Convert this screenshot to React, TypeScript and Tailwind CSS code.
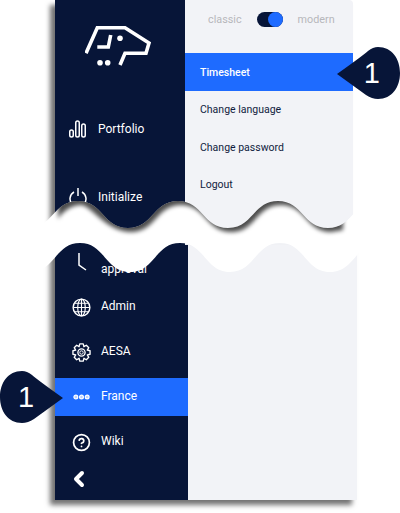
import React from 'react';
import { CircleHelp, ChevronLeft } from 'lucide-react';

const topEdge =
  'C53 228 53 201 78 201 S103 228 128 228 S153 201 178 201 S203 228 228 228 S253 201 278 201 S303 228 328 228 S353 201 378 201';
const bottomEdge =
  'L380 243 C355 243 355 272 330 272 S305 243 280 243 S255 272 230 272 S205 243 180 243 S155 272 130 272 S105 243 80 243 S55 272 30 272';
const bandPath = `M0 228 L28 228 ${topEdge} L400 201 L400 243 ${bottomEdge} L0 272 Z`;

// eight teeth, drawn as one outline
const gearPoints = Array.from({ length: 8 }, (_, i) => {
  const a = (i * Math.PI) / 4;
  const at = (r: number, off: number) =>
    `${(10 + r * Math.cos(a + off)).toFixed(2)},${(10 + r * Math.sin(a + off)).toFixed(2)}`;
  return [at(6.6, -0.4), at(9.2, -0.2), at(9.2, 0.2), at(6.6, 0.4)].join(' ');
}).join(' ');

const Logo: React.FC = () => (
  <svg viewBox="0 0 70 42" className="w-[70px] h-[42px]" fill="none" stroke="white" strokeWidth="3.600">
    <path d="M1 27.300 L12.300 1.800 H40 L64 17 L61 27.300 H40 L35 39" />
    <path d="M25.700 9 L23.300 21 H12.300" />
    <circle cx="15" cy="36.700" r="2.800" fill="white" stroke="none" />
    <circle cx="22.700" cy="36.700" r="2.800" fill="white" stroke="none" />
    <circle cx="35" cy="12.300" r="2.800" fill="white" stroke="none" />
  </svg>
);

const Bars: React.FC = () => (
  <svg viewBox="0 0 18 18" className="w-[18px] h-[18px]" fill="none" stroke="white" strokeWidth="1.500">
    <rect x="0.750" y="10" width="3.500" height="7" rx="1.750" />
    <rect x="6.750" y="1" width="3.500" height="16" rx="1.750" />
    <rect x="12.750" y="4" width="3.500" height="13" rx="1.750" />
  </svg>
);

const Power: React.FC = () => (
  <svg viewBox="0 0 18 18" className="w-[18px] h-[18px]" fill="none" stroke="white" strokeWidth="1.500">
    <path d="M5 4 A8 8 0 1 0 13 4" />
    <path d="M9 0 V8" />
  </svg>
);

const Globe: React.FC = () => (
  <svg viewBox="0 0 20 20" className="w-[19px] h-[19px]" fill="none" stroke="white" strokeWidth="1.200">
    <circle cx="10" cy="10" r="8.800" strokeWidth="1.500" />
    <ellipse cx="10" cy="10" rx="4" ry="8.800" />
    <path d="M10 1 V19 M1.500 10 H18.500 M3 5.500 H17 M3 14.500 H17" />
  </svg>
);

const Gear: React.FC = () => (
  <svg viewBox="0 0 20 20" className="w-[19px] h-[19px]" fill="none" stroke="white" strokeWidth="1.400" strokeLinejoin="round">
    <polygon points={gearPoints} />
    <circle cx="10" cy="10" r="3.800" />
    <circle cx="10" cy="10" r="1.800" strokeWidth="1" />
  </svg>
);

const Dots: React.FC = () => (
  <svg viewBox="0 0 18 6" className="w-[17px] h-[6px]" fill="#b9cfff" stroke="#ffffff" strokeWidth="1.300">
    <circle cx="3" cy="3" r="2" />
    <circle cx="9" cy="3" r="2" />
    <circle cx="15" cy="3" r="2" />
  </svg>
);

const NavItem: React.FC<{ icon: React.ReactNode; label: string; active?: boolean; top?: boolean }> = ({ icon, label, active, top }) => (
  <div className={`flex items-center h-[38px] shrink-0 text-white ${top ? 'pl-[13px]' : 'pl-[16px]'} ${active ? 'bg-[#1e6bff]' : ''}`}>
    <div className="w-[20px] flex justify-center">{icon}</div>
    <span className={`ml-[10px] text-[12px] ${top ? '' : 'pb-[2px]'}`}>{label}</span>
  </div>
);

const Callout: React.FC<{ side: 'left' | 'right' }> = ({ side }) => (
  <div
    className={`absolute w-[64px] h-[54px] flex items-center ${
      side === 'right' ? 'left-[336px] top-[46px] justify-end pr-[20px]' : 'left-0 top-[370px] justify-start pl-[18px]'
    }`}
  >
    <svg viewBox="0 0 64 54" className={`absolute inset-0 w-[64px] h-[54px] ${side === 'left' ? '-scale-x-100' : ''}`}>
      <path d="M1 28 Q25 11 32 5 Q37 1 42 1 C56 1 64 13 64 27 C64 41 56 53 42 53 Q36 53 30 49 Z" fill="#071538" />
    </svg>
    <span className="relative text-white text-[29px] leading-none font-['Liberation_Sans',sans-serif]">1</span>
  </div>
);

const MenuLink: React.FC<{ label: string; active?: boolean; short?: boolean }> = ({ label, active, short }) => (
  <div
    className={`flex items-center pl-[15px] text-[10.500px] ${short ? 'h-[36px]' : 'h-[38px]'} ${
      active ? 'pt-[1px] bg-[#1e6bff] text-white font-medium' : 'text-[#101c3e]'
    }`}
  >
    {label}
  </div>
);

const App: React.FC = () => {
  return (
    <div className="relative w-[400px] h-[513px] overflow-hidden bg-white font-['Roboto',sans-serif]">
      {/* top half */}
      <div className="ml-[55px] w-[298px] h-[245px] flex bg-[#f2f3f7] rounded-tr-[4px] shadow-[-5px_5px_5px_rgba(0,0,0,0.55)]">
        <div className="w-[130px] bg-[#071538] flex flex-col pt-[26px]">
          <div className="pl-[30px] mb-[42px]">
            <Logo />
          </div>
          <div className="flex flex-col gap-[30px]">
            <NavItem top icon={<Bars />} label="Portfolio" />
            <NavItem top icon={<Power />} label="Initialize" />
          </div>
        </div>
        <div className="flex-1">
          <div className="h-[53px] flex items-start pt-[12px] pl-[23px] text-[10.800px] text-[#b7b7bb]">
            <span className="leading-[15px]">classic</span>
            <div className="mx-[15px] w-[26px] h-[15px] rounded-full bg-[#071538] flex justify-end">
              <div className="w-[15px] h-[15px] rounded-full bg-[#1e6bff]" />
            </div>
            <span className="leading-[15px]">modern</span>
          </div>
          <MenuLink label="Timesheet" active />
          <MenuLink label="Change language" />
          <MenuLink label="Change password" />
          <MenuLink label="Logout" short />
        </div>
      </div>

      {/* bottom half */}
      <div className="ml-[55px] w-[302px] h-[255px] flex bg-[#f2f3f7] shadow-[-5px_5px_5px_rgba(0,0,0,0.55)]">
        <div className="w-[133px] bg-[#071538] flex flex-col">
          <div className="h-[43px] shrink-0 relative text-white">
            <svg viewBox="0 0 12 22" className="absolute left-[21px] top-[6px] w-[12px] h-[22px]" fill="none" stroke="white" strokeWidth="1.500">
              <path d="M3 2 V14 L10 19" />
            </svg>
            <span className="absolute left-[46px] top-[15px] text-[12px]">approval</span>
          </div>
          <div className="flex flex-col gap-[7px]">
            <NavItem icon={<Globe />} label="Admin" />
            <NavItem icon={<Gear />} label="AESA" />
            <NavItem icon={<Dots />} label="France" active />
            <NavItem icon={<CircleHelp size={19} strokeWidth={2.200} />} label="Wiki" />
          </div>
          <div className="pl-[12px] pt-[6px]">
            <ChevronLeft size={24} strokeWidth={4} className="text-white" />
          </div>
        </div>
      </div>

      {/* torn paper band */}
      <svg viewBox="0 190 400 95" className="absolute left-0 top-[190px] w-[400px] h-[95px]">
        <defs>
          <clipPath id="band">
            <path d={bandPath} />
          </clipPath>
          <filter id="soft" x="-5%" y="-20%" width="110%" height="140%">
            <feGaussianBlur stdDeviation="2" />
          </filter>
        </defs>
        <path d={bandPath} fill="white" />
        <g clipPath="url(#band)">
          <path
            d="M55 190 L55 215 C58 209 68 201 78 201 S103 228 128 228 S153 201 178 201 S203 228 228 228 S253 201 278 201 S303 228 328 228 L340 226 L340 190 Z"
            fill="black"
            fillOpacity="0.7"
            filter="url(#soft)"
            transform="translate(3 4)"
          />
        </g>
      </svg>

      <Callout side="right" />
      <Callout side="left" />
    </div>
  );
};

export default App;
